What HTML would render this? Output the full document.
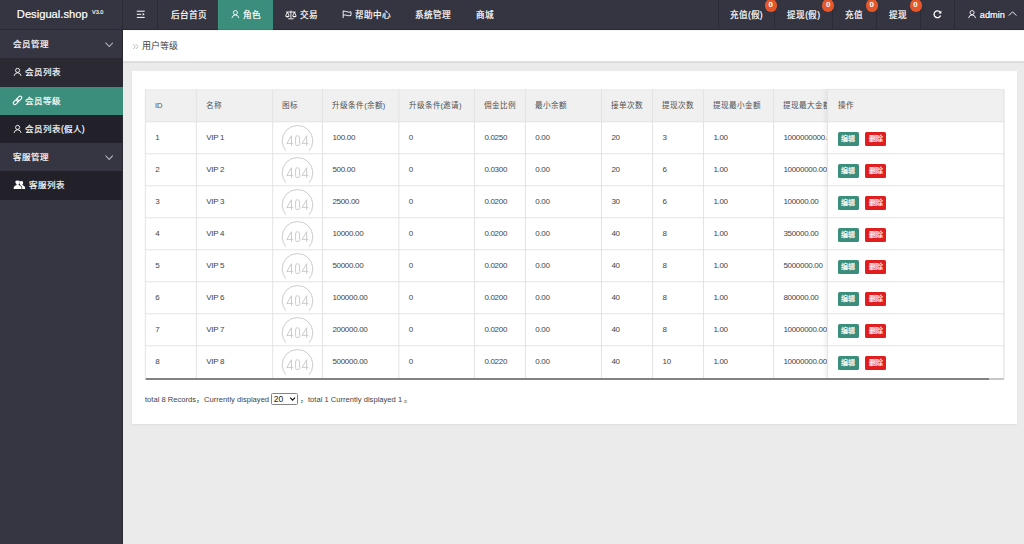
<!DOCTYPE html>
<html lang="zh-CN"><head><meta charset="utf-8"><style>
*{margin:0;padding:0;box-sizing:border-box}
html,body{width:1024px;height:544px;overflow:hidden;background:#ebebeb;font-family:"Liberation Sans",sans-serif;}
.a{position:absolute}
.t{position:absolute;white-space:nowrap;color:#fff;line-height:10px}
.w{-webkit-text-stroke:0.2px #fff}
.c{color:#444;font-size:8px;letter-spacing:-0.3px}
.h{color:#505050;font-size:7.6px}
.bt{position:absolute;width:21.2px;height:13.9px;border-radius:1.5px;color:#fff;font-size:7px;line-height:13.9px;text-align:center;-webkit-text-stroke:0.2px #fff}
</style></head><body>

<div class="a" style="left:0;top:0;width:1024px;height:30px;background:#353441"></div>
<div class="a" style="left:218.2px;top:0;width:54.7px;height:30px;background:#3b8e7b"></div>
<div class="a" style="left:0;top:29px;width:1024px;height:1px;background:#2a2932"></div>
<div class="a" style="left:218.2px;top:29px;width:54.7px;height:1px;background:#2f8370"></div>
<div class="a" style="left:218px;top:0;width:1px;height:29px;background:#42967f"></div>
<div class="a" style="left:122px;top:0;width:1px;height:30px;background:#2b2b36"></div>
<div class="a" style="left:157px;top:0;width:1px;height:30px;background:#2b2b36"></div>
<div class="a" style="left:717.5px;top:0;width:1px;height:30px;background:#2b2b36"></div>
<div class="a" style="left:774.4px;top:0;width:1px;height:30px;background:#2b2b36"></div>
<div class="a" style="left:831.9px;top:0;width:1px;height:30px;background:#2b2b36"></div>
<div class="a" style="left:875.7px;top:0;width:1px;height:30px;background:#2b2b36"></div>
<div class="a" style="left:919.6px;top:0;width:1px;height:30px;background:#2b2b36"></div>
<div class="a" style="left:954.2px;top:0;width:1px;height:30px;background:#2b2b36"></div>
<div class="t w" style="left:16.8px;top:7.1px;font-size:11.2px;line-height:14px">Desigual.shop</div>
<div class="t" style="left:91.9px;top:9.2px;font-size:11px;line-height:10px;transform:scale(0.5);transform-origin:0 0;-webkit-text-stroke:0.3px #fff">V3.0</div>
<div class="t w" style="left:171px;top:9.7px;font-size:8.6px">后台首页</div>
<div class="t w" style="left:243.3px;top:9.7px;font-size:8.6px">角色</div>
<div class="t w" style="left:300.3px;top:9.7px;font-size:8.6px">交易</div>
<div class="t w" style="left:355.4px;top:9.7px;font-size:8.6px">帮助中心</div>
<div class="t w" style="left:414.9px;top:9.7px;font-size:8.6px">系统管理</div>
<div class="t w" style="left:475.5px;top:9.7px;font-size:8.6px">商城</div>
<div class="t w" style="left:730px;top:9.7px;font-size:8.6px">充值(假)</div>
<div class="t w" style="left:787.3px;top:9.7px;font-size:8.6px">提现(假)</div>
<div class="t w" style="left:844.7px;top:9.7px;font-size:8.6px">充值</div>
<div class="t w" style="left:888.8px;top:9.7px;font-size:8.6px">提现</div>
<div class="t w" style="left:979.8px;top:9.5px;font-size:9.2px">admin</div>
<div class="a" style="left:764.6999999999999px;top:-0.6px;width:12.2px;height:12.2px;border-radius:6.1px;background:#e4572b;color:#fff;font-size:8px;line-height:12.2px;text-align:center;font-weight:bold">0</div>
<div class="a" style="left:822.1px;top:-0.6px;width:12.2px;height:12.2px;border-radius:6.1px;background:#e4572b;color:#fff;font-size:8px;line-height:12.2px;text-align:center;font-weight:bold">0</div>
<div class="a" style="left:865.6999999999999px;top:-0.6px;width:12.2px;height:12.2px;border-radius:6.1px;background:#e4572b;color:#fff;font-size:8px;line-height:12.2px;text-align:center;font-weight:bold">0</div>
<div class="a" style="left:909.5px;top:-0.6px;width:12.2px;height:12.2px;border-radius:6.1px;background:#e4572b;color:#fff;font-size:8px;line-height:12.2px;text-align:center;font-weight:bold">0</div>
<div class="a" style="left:0;top:30px;width:123px;height:514px;background:#363542"></div>
<div class="a" style="left:122px;top:30px;width:1px;height:514px;background:#2a2933"></div>
<div class="a" style="left:0;top:58px;width:122px;height:28.5px;background:#2b2a33"></div>
<div class="a" style="left:0;top:86.5px;width:123px;height:28.5px;background:#3b8e7b"></div>
<div class="a" style="left:0;top:115px;width:122px;height:28px;background:#22212a"></div>
<div class="a" style="left:0;top:171px;width:122px;height:28.5px;background:#22212a"></div>
<div class="t w" style="left:13.3px;top:38.7px;font-size:8.5px">会员管理</div>
<div class="t w" style="left:25px;top:67.1px;font-size:8.5px">会员列表</div>
<div class="t w" style="left:25px;top:95.6px;font-size:8.5px">会员等级</div>
<div class="t w" style="left:25px;top:124.1px;font-size:8.5px">会员列表(假人)</div>
<div class="t w" style="left:13.3px;top:152.1px;font-size:8.5px">客服管理</div>
<div class="t w" style="left:28.5px;top:180.1px;font-size:8.5px">客服列表</div>
<div class="a" style="left:123px;top:30px;width:901px;height:31px;background:linear-gradient(#f3f3f3,#fff 1.5px)"></div>
<div class="a" style="left:123px;top:61px;width:901px;height:2px;background:linear-gradient(#e3e3e3,#d9d9d9)"></div>
<div class="t" style="left:141.9px;top:40.6px;font-size:9px;color:#3c3c3c">用户等级</div>
<div class="a" style="left:132px;top:71px;width:885px;height:353px;background:#fff;box-shadow:0 1px 2px rgba(0,0,0,.06)"></div>
<div class="a" style="left:145.3px;top:89.6px;width:858.9000000000001px;height:32.2px;background:#f0f0f0"></div>
<svg class="a" style="left:0;top:0" width="1024" height="544" viewBox="0 0 1024 544" stroke="#e3e3e3" stroke-width="1">
<path d="M145.3 121.8H1004.2"/>
<path d="M145.3 153.8H1004.2"/>
<path d="M145.3 185.8H1004.2"/>
<path d="M145.3 217.8H1004.2"/>
<path d="M145.3 249.8H1004.2"/>
<path d="M145.3 281.8H1004.2"/>
<path d="M145.3 313.8H1004.2"/>
<path d="M145.3 345.8H1004.2"/>
<path d="M145.3 89.6H1004.2" stroke="#ececec"/>
<path d="M196.3 89.6V378"/>
<path d="M272.7 89.6V378"/>
<path d="M322.5 89.6V378"/>
<path d="M398.9 89.6V378"/>
<path d="M474.5 89.6V378"/>
<path d="M525.4 89.6V378"/>
<path d="M601.5 89.6V378"/>
<path d="M652.6 89.6V378"/>
<path d="M703.5 89.6V378"/>
<path d="M773.5 89.6V378"/>
<path d="M145.3 89.6V378M1003.8000000000001 89.6V378"/>
</svg>
<div class="t h" style="left:155.0px;top:100.9px">ID</div>
<div class="t h" style="left:206.0px;top:100.9px">名称</div>
<div class="t h" style="left:282.4px;top:100.9px">图标</div>
<div class="t h" style="left:332.2px;top:100.9px">升级条件(余额)</div>
<div class="t h" style="left:408.59999999999997px;top:100.9px">升级条件(邀请)</div>
<div class="t h" style="left:484.2px;top:100.9px">佣金比例</div>
<div class="t h" style="left:535.1px;top:100.9px">最小余额</div>
<div class="t h" style="left:611.2px;top:100.9px">接单次数</div>
<div class="t h" style="left:662.3000000000001px;top:100.9px">提现次数</div>
<div class="t h" style="left:713.2px;top:100.9px">提现最小金额</div>
<div class="t h" style="left:783.2px;top:100.9px">提现最大金额</div>
<div class="t c" style="left:155.20000000000002px;top:133.3px">1</div>
<div class="t c" style="left:206.20000000000002px;top:133.3px">VIP 1</div>
<div class="t c" style="left:332.4px;top:133.3px">100.00</div>
<div class="t c" style="left:408.79999999999995px;top:133.3px">0</div>
<div class="t c" style="left:484.4px;top:133.3px">0.0250</div>
<div class="t c" style="left:535.3px;top:133.3px">0.00</div>
<div class="t c" style="left:611.4px;top:133.3px">20</div>
<div class="t c" style="left:662.5px;top:133.3px">3</div>
<div class="t c" style="left:713.4px;top:133.3px">1.00</div>
<div class="t c" style="left:783.4px;top:133.3px">1000000000.00</div>
<div class="t c" style="left:155.20000000000002px;top:165.3px">2</div>
<div class="t c" style="left:206.20000000000002px;top:165.3px">VIP 2</div>
<div class="t c" style="left:332.4px;top:165.3px">500.00</div>
<div class="t c" style="left:408.79999999999995px;top:165.3px">0</div>
<div class="t c" style="left:484.4px;top:165.3px">0.0300</div>
<div class="t c" style="left:535.3px;top:165.3px">0.00</div>
<div class="t c" style="left:611.4px;top:165.3px">20</div>
<div class="t c" style="left:662.5px;top:165.3px">6</div>
<div class="t c" style="left:713.4px;top:165.3px">1.00</div>
<div class="t c" style="left:783.4px;top:165.3px">10000000.00</div>
<div class="t c" style="left:155.20000000000002px;top:197.3px">3</div>
<div class="t c" style="left:206.20000000000002px;top:197.3px">VIP 3</div>
<div class="t c" style="left:332.4px;top:197.3px">2500.00</div>
<div class="t c" style="left:408.79999999999995px;top:197.3px">0</div>
<div class="t c" style="left:484.4px;top:197.3px">0.0200</div>
<div class="t c" style="left:535.3px;top:197.3px">0.00</div>
<div class="t c" style="left:611.4px;top:197.3px">30</div>
<div class="t c" style="left:662.5px;top:197.3px">6</div>
<div class="t c" style="left:713.4px;top:197.3px">1.00</div>
<div class="t c" style="left:783.4px;top:197.3px">100000.00</div>
<div class="t c" style="left:155.20000000000002px;top:229.3px">4</div>
<div class="t c" style="left:206.20000000000002px;top:229.3px">VIP 4</div>
<div class="t c" style="left:332.4px;top:229.3px">10000.00</div>
<div class="t c" style="left:408.79999999999995px;top:229.3px">0</div>
<div class="t c" style="left:484.4px;top:229.3px">0.0200</div>
<div class="t c" style="left:535.3px;top:229.3px">0.00</div>
<div class="t c" style="left:611.4px;top:229.3px">40</div>
<div class="t c" style="left:662.5px;top:229.3px">8</div>
<div class="t c" style="left:713.4px;top:229.3px">1.00</div>
<div class="t c" style="left:783.4px;top:229.3px">350000.00</div>
<div class="t c" style="left:155.20000000000002px;top:261.3px">5</div>
<div class="t c" style="left:206.20000000000002px;top:261.3px">VIP 5</div>
<div class="t c" style="left:332.4px;top:261.3px">50000.00</div>
<div class="t c" style="left:408.79999999999995px;top:261.3px">0</div>
<div class="t c" style="left:484.4px;top:261.3px">0.0200</div>
<div class="t c" style="left:535.3px;top:261.3px">0.00</div>
<div class="t c" style="left:611.4px;top:261.3px">40</div>
<div class="t c" style="left:662.5px;top:261.3px">8</div>
<div class="t c" style="left:713.4px;top:261.3px">1.00</div>
<div class="t c" style="left:783.4px;top:261.3px">5000000.00</div>
<div class="t c" style="left:155.20000000000002px;top:293.3px">6</div>
<div class="t c" style="left:206.20000000000002px;top:293.3px">VIP 6</div>
<div class="t c" style="left:332.4px;top:293.3px">100000.00</div>
<div class="t c" style="left:408.79999999999995px;top:293.3px">0</div>
<div class="t c" style="left:484.4px;top:293.3px">0.0200</div>
<div class="t c" style="left:535.3px;top:293.3px">0.00</div>
<div class="t c" style="left:611.4px;top:293.3px">40</div>
<div class="t c" style="left:662.5px;top:293.3px">8</div>
<div class="t c" style="left:713.4px;top:293.3px">1.00</div>
<div class="t c" style="left:783.4px;top:293.3px">800000.00</div>
<div class="t c" style="left:155.20000000000002px;top:325.3px">7</div>
<div class="t c" style="left:206.20000000000002px;top:325.3px">VIP 7</div>
<div class="t c" style="left:332.4px;top:325.3px">200000.00</div>
<div class="t c" style="left:408.79999999999995px;top:325.3px">0</div>
<div class="t c" style="left:484.4px;top:325.3px">0.0200</div>
<div class="t c" style="left:535.3px;top:325.3px">0.00</div>
<div class="t c" style="left:611.4px;top:325.3px">40</div>
<div class="t c" style="left:662.5px;top:325.3px">8</div>
<div class="t c" style="left:713.4px;top:325.3px">1.00</div>
<div class="t c" style="left:783.4px;top:325.3px">10000000.00</div>
<div class="t c" style="left:155.20000000000002px;top:357.3px">8</div>
<div class="t c" style="left:206.20000000000002px;top:357.3px">VIP 8</div>
<div class="t c" style="left:332.4px;top:357.3px">500000.00</div>
<div class="t c" style="left:408.79999999999995px;top:357.3px">0</div>
<div class="t c" style="left:484.4px;top:357.3px">0.0220</div>
<div class="t c" style="left:535.3px;top:357.3px">0.00</div>
<div class="t c" style="left:611.4px;top:357.3px">40</div>
<div class="t c" style="left:662.5px;top:357.3px">10</div>
<div class="t c" style="left:713.4px;top:357.3px">1.00</div>
<div class="t c" style="left:783.4px;top:357.3px">10000000.00</div>
<svg class="a" style="left:0;top:0" width="1024" height="544" viewBox="0 0 1024 544">
<clipPath id="c122"><rect x="272" y="122" width="50" height="28.8"/></clipPath><g clip-path="url(#c122)"><g transform="translate(0 0)" fill="none" stroke="#cbc7c7" stroke-width="0.95"><circle cx="297.5" cy="140.8" r="15.3"/><path d="M291.5 145.9V135.7L286.9 143.4H293.1"/><rect x="295.6" y="135.7" width="4" height="10.1" rx="2"/><path d="M306.7 145.9V135.7L302.1 143.4H308.3"/></g></g>
<clipPath id="c154"><rect x="272" y="154" width="50" height="28.8"/></clipPath><g clip-path="url(#c154)"><g transform="translate(0 32)" fill="none" stroke="#cbc7c7" stroke-width="0.95"><circle cx="297.5" cy="140.8" r="15.3"/><path d="M291.5 145.9V135.7L286.9 143.4H293.1"/><rect x="295.6" y="135.7" width="4" height="10.1" rx="2"/><path d="M306.7 145.9V135.7L302.1 143.4H308.3"/></g></g>
<clipPath id="c186"><rect x="272" y="186" width="50" height="28.8"/></clipPath><g clip-path="url(#c186)"><g transform="translate(0 64)" fill="none" stroke="#cbc7c7" stroke-width="0.95"><circle cx="297.5" cy="140.8" r="15.3"/><path d="M291.5 145.9V135.7L286.9 143.4H293.1"/><rect x="295.6" y="135.7" width="4" height="10.1" rx="2"/><path d="M306.7 145.9V135.7L302.1 143.4H308.3"/></g></g>
<clipPath id="c218"><rect x="272" y="218" width="50" height="28.8"/></clipPath><g clip-path="url(#c218)"><g transform="translate(0 96)" fill="none" stroke="#cbc7c7" stroke-width="0.95"><circle cx="297.5" cy="140.8" r="15.3"/><path d="M291.5 145.9V135.7L286.9 143.4H293.1"/><rect x="295.6" y="135.7" width="4" height="10.1" rx="2"/><path d="M306.7 145.9V135.7L302.1 143.4H308.3"/></g></g>
<clipPath id="c250"><rect x="272" y="250" width="50" height="28.8"/></clipPath><g clip-path="url(#c250)"><g transform="translate(0 128)" fill="none" stroke="#cbc7c7" stroke-width="0.95"><circle cx="297.5" cy="140.8" r="15.3"/><path d="M291.5 145.9V135.7L286.9 143.4H293.1"/><rect x="295.6" y="135.7" width="4" height="10.1" rx="2"/><path d="M306.7 145.9V135.7L302.1 143.4H308.3"/></g></g>
<clipPath id="c282"><rect x="272" y="282" width="50" height="28.8"/></clipPath><g clip-path="url(#c282)"><g transform="translate(0 160)" fill="none" stroke="#cbc7c7" stroke-width="0.95"><circle cx="297.5" cy="140.8" r="15.3"/><path d="M291.5 145.9V135.7L286.9 143.4H293.1"/><rect x="295.6" y="135.7" width="4" height="10.1" rx="2"/><path d="M306.7 145.9V135.7L302.1 143.4H308.3"/></g></g>
<clipPath id="c314"><rect x="272" y="314" width="50" height="28.8"/></clipPath><g clip-path="url(#c314)"><g transform="translate(0 192)" fill="none" stroke="#cbc7c7" stroke-width="0.95"><circle cx="297.5" cy="140.8" r="15.3"/><path d="M291.5 145.9V135.7L286.9 143.4H293.1"/><rect x="295.6" y="135.7" width="4" height="10.1" rx="2"/><path d="M306.7 145.9V135.7L302.1 143.4H308.3"/></g></g>
<clipPath id="c346"><rect x="272" y="346" width="50" height="28.8"/></clipPath><g clip-path="url(#c346)"><g transform="translate(0 224)" fill="none" stroke="#cbc7c7" stroke-width="0.95"><circle cx="297.5" cy="140.8" r="15.3"/><path d="M291.5 145.9V135.7L286.9 143.4H293.1"/><rect x="295.6" y="135.7" width="4" height="10.1" rx="2"/><path d="M306.7 145.9V135.7L302.1 143.4H308.3"/></g></g>
</svg>
<div class="a" style="left:827px;top:89.6px;width:177.20000000000005px;height:288.4px;background:#fff;box-shadow:-2px 0 4px rgba(0,0,0,.06)"></div>
<div class="a" style="left:827px;top:89.6px;width:177.20000000000005px;height:32.2px;background:#f0f0f0"></div>
<svg class="a" style="left:0;top:0" width="1024" height="544" viewBox="0 0 1024 544" stroke="#e3e3e3" stroke-width="1">
<path d="M827 121.8H1004.2"/>
<path d="M827 153.8H1004.2"/>
<path d="M827 185.8H1004.2"/>
<path d="M827 217.8H1004.2"/>
<path d="M827 249.8H1004.2"/>
<path d="M827 281.8H1004.2"/>
<path d="M827 313.8H1004.2"/>
<path d="M827 345.8H1004.2"/>
<path d="M827.6 89.6V378M1003.8000000000001 89.6V378"/>
</svg>
<div class="t h" style="left:838.3px;top:100.9px">操作</div>
<div class="bt" style="left:837.6px;top:131.7px;background:#3b8e7b">编辑</div>
<div class="bt" style="left:865.2px;top:131.7px;background:#e01e1e">删除</div>
<div class="bt" style="left:837.6px;top:163.7px;background:#3b8e7b">编辑</div>
<div class="bt" style="left:865.2px;top:163.7px;background:#e01e1e">删除</div>
<div class="bt" style="left:837.6px;top:195.7px;background:#3b8e7b">编辑</div>
<div class="bt" style="left:865.2px;top:195.7px;background:#e01e1e">删除</div>
<div class="bt" style="left:837.6px;top:227.7px;background:#3b8e7b">编辑</div>
<div class="bt" style="left:865.2px;top:227.7px;background:#e01e1e">删除</div>
<div class="bt" style="left:837.6px;top:259.7px;background:#3b8e7b">编辑</div>
<div class="bt" style="left:865.2px;top:259.7px;background:#e01e1e">删除</div>
<div class="bt" style="left:837.6px;top:291.7px;background:#3b8e7b">编辑</div>
<div class="bt" style="left:865.2px;top:291.7px;background:#e01e1e">删除</div>
<div class="bt" style="left:837.6px;top:323.7px;background:#3b8e7b">编辑</div>
<div class="bt" style="left:865.2px;top:323.7px;background:#e01e1e">删除</div>
<div class="bt" style="left:837.6px;top:355.7px;background:#3b8e7b">编辑</div>
<div class="bt" style="left:865.2px;top:355.7px;background:#e01e1e">删除</div>
<div class="a" style="left:145.3px;top:377.8px;width:858.9000000000001px;height:2.2px;background:#c8c8c8"></div>
<div class="a" style="left:146px;top:377.8px;width:843.4px;height:2.2px;background:#828282"></div>
<div class="t" style="left:145px;top:394.5px;font-size:7.6px;color:#444">total 8 Records，Currently displayed</div>
<div class="a" style="left:271.2px;top:393px;width:26.5px;height:11.6px;border:1px solid #858585;border-radius:1.5px;background:#fff"></div>
<div class="t" style="left:273.8px;top:393.8px;font-size:8.6px;color:#222">20</div>
<div class="t" style="left:300px;top:394.5px;font-size:7.6px;color:#444">，total 1 Currently displayed 1 。</div>
<svg class="a" style="left:0;top:0" width="1024" height="544" viewBox="0 0 1024 544" fill="none" stroke="#fff" stroke-width="0.9">
<path d="M136.8 11.2H144.7M136.8 17.4H144.7M136.8 14.3H141.2" stroke-width="1"/><path d="M142.6 12.9L144.6 14.3L142.6 15.7Z" fill="#fff" stroke="none"/>
<circle cx="235.4" cy="12.599999999999998" r="2.05"/><path d="M231.9 18.1Q232.4 15.049999999999999 235.4 14.95Q238.4 15.049999999999999 238.9 18.1"/>
<circle cx="17.6" cy="70.4" r="2.05"/><path d="M14.100000000000001 75.9Q14.600000000000001 72.85000000000001 17.6 72.75Q20.6 72.85000000000001 21.1 75.9"/>
<circle cx="17.6" cy="127.4" r="2.05"/><path d="M14.100000000000001 132.9Q14.600000000000001 129.85000000000002 17.6 129.75000000000003Q20.6 129.85000000000002 21.1 132.9"/>
<circle cx="972.1" cy="12.599999999999998" r="2.05"/><path d="M968.6 18.1Q969.1 15.049999999999999 972.1 14.95Q975.1 15.049999999999999 975.6 18.1"/>
<path d="M290.9 10.6V18.3M286.2 12H295.6M287.4 12L285.6 16.2M287.4 12L289.2 16.2M294.4 12L292.6 16.2M294.4 12L296.2 16.2M288.2 18.8H293.6" stroke-width="0.9"/><path d="M285.4 16.1H289.4Q289 17.5 287.4 17.5Q285.8 17.5 285.4 16.1ZM292.4 16.1H296.4Q296 17.5 294.4 17.5Q292.8 17.5 292.4 16.1Z" fill="#fff" stroke="none"/>
<path d="M343.2 10.6V18.1M343.2 11.3Q345 10.8 347 11.8Q349 12.6 351 11.8V15.4Q349 16.2 347 15.4Q345 14.6 343.2 15.1"/>
<path d="M940.2 12.2A3.4 3.4 0 1 0 940.6 15.6" stroke-width="1.3"/><path d="M941.4 10.6V13.6H938.4Z" fill="#fff" stroke="none"/>
<path d="M1008.8 15.6L1012.6 11.8L1016.4 15.6"/>
<path d="M105.5 42.7L109.2 46.6L112.8 42.9" stroke="#b8b8bc" stroke-width="1.05"/>
<path d="M105.5 155.5L109.2 159.4L112.8 155.7" stroke="#b8b8bc" stroke-width="1.05"/>
<g transform="translate(17.5 100.35) rotate(45)" stroke-width="1.1"><rect x="-1.6" y="-5.4" width="3.2" height="6.2" rx="1.6"/><rect x="-1.6" y="-0.8" width="3.2" height="6.2" rx="1.6"/></g>
<path d="M13.7 189.1V187.6Q14 185.6 16.6 184.9V184.2Q15.2 183.2 15.3 181.8Q15.4 180.4 17.6 180.4Q19.8 180.4 19.9 181.8Q20 183.2 18.6 184.2V184.9Q21.2 185.6 21.5 187.6V189.1Z" fill="#fff" stroke="none"/><path d="M20.2 184.9V184.4Q19.2 183.6 19.6 182Q20 181 21.4 181Q22.8 181 23.1 182Q23.4 183.6 22.4 184.4V184.9Q24.8 185.6 25.1 187.6V189.1H22.2V187.6Q22 185.9 20.2 184.9Z" fill="#fff" stroke="none"/>
<path d="M133 44.2L135.3 46.6L133 49M135.8 44.2L138.1 46.6L135.8 49" stroke="#aaa" stroke-width="0.8"/>
<path d="M290.2 397.6L292.6 400.1L295 397.6" stroke="#111" stroke-width="1.2"/>
</svg>
</body></html>
